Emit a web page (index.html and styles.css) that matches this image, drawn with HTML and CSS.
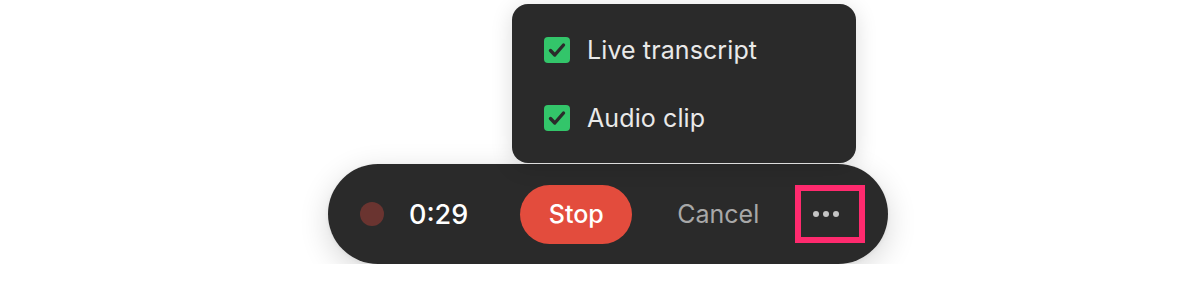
FILE: index.html
```html
<!DOCTYPE html>
<html>
<head>
<meta charset="utf-8">
<link rel="stylesheet" href="styles.css">
</head>
<body>
<div class="stage">
  <div class="bar">
    <div class="menu">
      <label class="item">
        <span class="check"><svg viewBox="0 0 26 26" width="26" height="26"><path d="M6.5 13.5 L10.8 18 L19.5 8" fill="none" stroke="#2b2b2b" stroke-width="3.4" stroke-linecap="round" stroke-linejoin="round"/></svg></span>
        <span class="label">Live transcript</span>
      </label>
      <label class="item">
        <span class="check"><svg viewBox="0 0 26 26" width="26" height="26"><path d="M6.5 13.5 L10.8 18 L19.5 8" fill="none" stroke="#2b2b2b" stroke-width="3.4" stroke-linecap="round" stroke-linejoin="round"/></svg></span>
        <span class="label">Audio clip</span>
      </label>
    </div>
    <span class="dot"></span>
    <span class="time">0:29</span>
    <button class="stop">Stop</button>
    <button class="cancel">Cancel</button>
    <button class="more"><span></span><span></span><span></span></button>
  </div>
</div>
</body>
</html>
```

FILE: styles.css
```css
html, body {
  margin: 0;
  background: #ffffff;
  font-family: Inter, "Noto Sans", "Liberation Sans", sans-serif;
}
.stage {
  padding: 164px 0 0 328px;
}
.bar {
  position: relative;
  display: flex;
  align-items: center;
  width: 560px;
  height: 100px;
  box-sizing: border-box;
  padding-left: 32px;
  background: #2a2a2a;
  border-radius: 50px;
  box-shadow: 0 8px 30px rgba(0, 0, 0, 0.16), 0 1px 4px rgba(0, 0, 0, 0.06);
}
.menu {
  position: absolute;
  left: 184px;
  bottom: calc(100% + 1px);
  width: 344px;
  height: 159px;
  box-sizing: border-box;
  padding: 20px 0 0 32px;
  background: #2a2a2a;
  border-radius: 16px;
  box-shadow: 0 4px 22px rgba(0, 0, 0, 0.14);
  display: flex;
  flex-direction: column;
  gap: 16px;
}
.item {
  display: flex;
  align-items: center;
  gap: 17px;
  height: 52px;
  line-height: 52px;
}
.check {
  width: 26px;
  height: 26px;
  border-radius: 4px;
  background: #33c56a;
  display: block;
  flex: none;
}
.check svg { display: block; }
.label {
  color: #e9e9e9;
  font-size: 25px;
  letter-spacing: 0.1px;
}
.dot {
  width: 24px;
  height: 24px;
  border-radius: 50%;
  background: #6a3430;
  flex: none;
}
.time {
  margin-left: 25px;
  color: #ffffff;
  font-size: 27px;
  font-weight: 500;
}
button {
  font-family: inherit;
  border: none;
  padding: 0;
  cursor: pointer;
}
.stop {
  margin-left: 52px;
  width: 112px;
  height: 59px;
  border-radius: 30px;
  background: #e34c3d;
  color: #ffffff;
  font-size: 25px;
  font-weight: 500;
}
.cancel {
  margin-left: 45px;
  background: none;
  color: #a8a8a8;
  font-size: 25px;
}
.more {
  margin-left: 36px;
  width: 70px;
  height: 58px;
  box-sizing: border-box;
  border: 6px solid #ff2a6e;
  padding-right: 8px;
  background: transparent;
  display: flex;
  align-items: center;
  justify-content: center;
  gap: 4px;
}
.more span {
  width: 6px;
  height: 6px;
  border-radius: 50%;
  background: #c4c4c4;
}
```
